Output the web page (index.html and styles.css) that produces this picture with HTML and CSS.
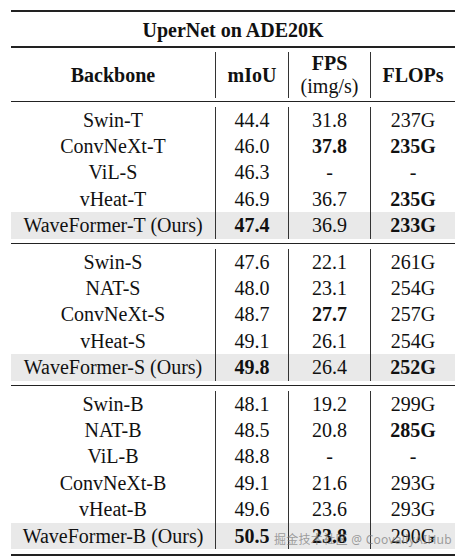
FILE: index.html
```html
<!DOCTYPE html>
<html lang="en">
<head>
    <meta charset="UTF-8">
    <title>UperNet on ADE20K</title>
    <link rel="stylesheet" href="styles.css">
</head>
<body>
    <div class="table">
        <div class="title">UperNet on ADE20K</div>

        <div class="section head">
            <div class="row">
                <div class="cell">Backbone</div>
                <div class="cell">mIoU</div>
                <div class="cell two-line">FPS<span class="unit">(img/s)</span></div>
                <div class="cell">FLOPs</div>
            </div>
        </div>

        <div class="section">
            <div class="row"><div class="cell">Swin-T</div><div class="cell">44.4</div><div class="cell">31.8</div><div class="cell">237G</div></div>
            <div class="row"><div class="cell">ConvNeXt-T</div><div class="cell">46.0</div><div class="cell b">37.8</div><div class="cell b">235G</div></div>
            <div class="row"><div class="cell">ViL-S</div><div class="cell">46.3</div><div class="cell">-</div><div class="cell">-</div></div>
            <div class="row"><div class="cell">vHeat-T</div><div class="cell">46.9</div><div class="cell">36.7</div><div class="cell b">235G</div></div>
            <div class="row ours"><div class="cell">WaveFormer-T (Ours)</div><div class="cell b">47.4</div><div class="cell">36.9</div><div class="cell b">233G</div></div>
        </div>

        <div class="section">
            <div class="row"><div class="cell">Swin-S</div><div class="cell">47.6</div><div class="cell">22.1</div><div class="cell">261G</div></div>
            <div class="row"><div class="cell">NAT-S</div><div class="cell">48.0</div><div class="cell">23.1</div><div class="cell">254G</div></div>
            <div class="row"><div class="cell">ConvNeXt-S</div><div class="cell">48.7</div><div class="cell b">27.7</div><div class="cell">257G</div></div>
            <div class="row"><div class="cell">vHeat-S</div><div class="cell">49.1</div><div class="cell">26.1</div><div class="cell">254G</div></div>
            <div class="row ours"><div class="cell">WaveFormer-S (Ours)</div><div class="cell b">49.8</div><div class="cell">26.4</div><div class="cell b">252G</div></div>
        </div>

        <div class="section last">
            <div class="row"><div class="cell">Swin-B</div><div class="cell">48.1</div><div class="cell">19.2</div><div class="cell">299G</div></div>
            <div class="row"><div class="cell">NAT-B</div><div class="cell">48.5</div><div class="cell">20.8</div><div class="cell b">285G</div></div>
            <div class="row"><div class="cell">ViL-B</div><div class="cell">48.8</div><div class="cell">-</div><div class="cell">-</div></div>
            <div class="row"><div class="cell">ConvNeXt-B</div><div class="cell">49.1</div><div class="cell">21.6</div><div class="cell">293G</div></div>
            <div class="row"><div class="cell">vHeat-B</div><div class="cell">49.6</div><div class="cell">23.6</div><div class="cell">293G</div></div>
            <div class="row ours"><div class="cell">WaveFormer-B (Ours)</div><div class="cell b">50.5</div><div class="cell b">23.8</div><div class="cell">290G</div></div>
            <div class="watermark">掘金技术社区 @ CoovallyAIHub</div>
        </div>
    </div>
</body>
</html>
```

FILE: styles.css
```css
body {
    margin: 0;
    background: #fff;
    font-family: "Liberation Serif", "Times New Roman", serif;
    font-size: 20px;
    color: #111;
}
.table {
    width: 444px;
    margin: 10px 0 0 11px;
    border-top: 2px solid #222;
}
.title {
    font-weight: bold;
    text-align: center;
    height: 34px;
    line-height: 36px;
    border-bottom: 2px solid #222;
}
.section {
    position: relative;
    padding: 4.5px 0;
    border-bottom: 1px solid #222;
}
.section.head {
    padding: 4px 0 3px;
    font-weight: bold;
}
.section.last {
    border-bottom: 2px solid #222;
}
.row {
    display: grid;
    grid-template-columns: 204px 73px 82px 85px;
    line-height: 26.4px;
}
.head .row {
    line-height: 23px;
}
.cell {
    text-align: center;
}
.cell + .cell {
    border-left: 1px solid #333;
}
.head .cell {
    display: flex;
    align-items: center;
    justify-content: center;
}
.head .two-line {
    flex-direction: column;
}
.unit {
    font-weight: normal;
}
.b {
    font-weight: bold;
}
.ours {
    background: #e9e9e9;
}
.watermark {
    position: absolute;
    right: 3px;
    bottom: 5px;
    font-family: "Noto Sans", "Noto Sans CJK SC", sans-serif;
    font-size: 12px;
    line-height: 18px;
    color: rgba(120, 120, 120, 0.7);
    letter-spacing: 0.3px;
}
```
